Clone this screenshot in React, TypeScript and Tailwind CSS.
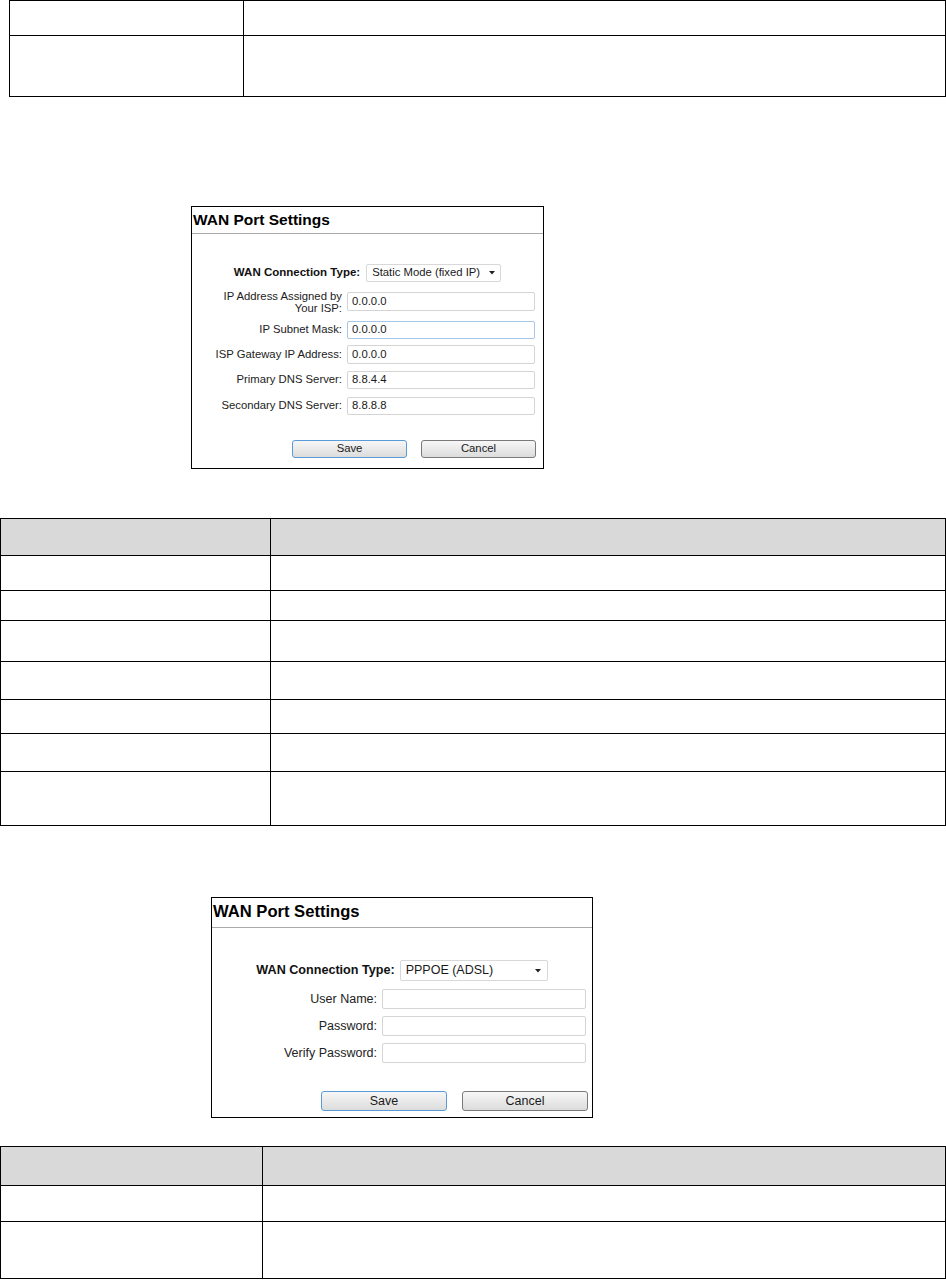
import React from "react";

const Caret = () => (
  <svg width="6" height="4" viewBox="0 0 6 4" className="block">
    <path d="M0 0 L6 0 L3 3.5 Z" fill="#222" />
  </svg>
);

export default function App() {
  return (
    <div className="w-[946px] min-h-[1280px] bg-white flex flex-col font-['Liberation_Sans',Arial,sans-serif] text-black">
      {/* Table 1 */}
      <div className="ml-[9px] w-[937px] border border-black flex flex-col">
        <div className="h-[35px] border-b border-black flex">
          <div className="w-[234px] border-r border-black" />
          <div className="flex-1" />
        </div>
        <div className="h-[60px] flex">
          <div className="w-[234px] border-r border-black" />
          <div className="flex-1" />
        </div>
      </div>

      {/* Dialog 1 */}
      <div className="ml-[191px] mt-[109px] w-[353px] h-[263px] border border-black bg-white flex flex-col">
        <div className="h-[25px] flex items-center pl-[1px] text-[15.5px] font-bold leading-none text-black">
          WAN Port Settings
        </div>
        <div className="mt-px h-px bg-[#a9a9a9]" />
        <div className="mt-[30px] h-[18px] flex justify-center items-center">
          <span className="text-[11.5px] font-bold leading-none text-[#111]">WAN Connection Type:</span>
          <div className="ml-[6px] w-[135px] h-[18px] border border-[#d8d8d8] rounded-[2px] bg-white flex items-center justify-between pl-[5px] pr-[5px]">
            <span className="text-[11.3px] leading-none text-[#1a1a1a]">Static Mode (fixed IP)</span>
            <Caret />
          </div>
        </div>
        <div className="mt-[10px] h-[19px] flex items-center">
          <div className="w-[150px] text-right text-[11.3px] leading-[12px] text-[#222]">
            IP Address Assigned by
            <br />
            Your ISP:
          </div>
          <div className="ml-[5px] w-[188px] h-[19px] border border-[#d4d4d4] rounded-[2px] flex items-center pl-[4px] text-[11.3px] leading-none text-[#1a1a1a]">
            0.0.0.0
          </div>
        </div>
        <div className="mt-[10px] h-[18px] flex items-center">
          <div className="w-[150px] text-right text-[11.3px] leading-none text-[#222]">IP Subnet Mask:</div>
          <div className="ml-[5px] w-[188px] h-[18px] border border-[#a6c8e6] rounded-[2px] flex items-center pl-[4px] text-[11.3px] leading-none text-[#1a1a1a]">
            0.0.0.0
          </div>
        </div>
        <div className="mt-[6px] h-[19px] flex items-center">
          <div className="w-[150px] text-right text-[11.3px] leading-none text-[#222]">ISP Gateway IP Address:</div>
          <div className="ml-[5px] w-[188px] h-[19px] border border-[#d4d4d4] rounded-[2px] flex items-center pl-[4px] text-[11.3px] leading-none text-[#1a1a1a]">
            0.0.0.0
          </div>
        </div>
        <div className="mt-[7px] h-[18px] flex items-center">
          <div className="w-[150px] text-right text-[11.3px] leading-none text-[#222]">Primary DNS Server:</div>
          <div className="ml-[5px] w-[188px] h-[18px] border border-[#d4d4d4] rounded-[2px] flex items-center pl-[4px] text-[11.3px] leading-none text-[#1a1a1a]">
            8.8.4.4
          </div>
        </div>
        <div className="mt-[8px] h-[18px] flex items-center">
          <div className="w-[150px] text-right text-[11.3px] leading-none text-[#222]">Secondary DNS Server:</div>
          <div className="ml-[5px] w-[188px] h-[18px] border border-[#d4d4d4] rounded-[2px] flex items-center pl-[4px] text-[11.3px] leading-none text-[#1a1a1a]">
            8.8.8.8
          </div>
        </div>
        <div className="mt-[25px] h-[18px] flex justify-end pr-[7px] gap-[14px]">
          <div className="w-[115px] h-[18px] border border-[#5a9ad6] rounded-[3px] bg-gradient-to-b from-[#f7f7f7] to-[#dcdcdc] flex items-center justify-center text-[11.3px] leading-none text-[#1a1a1a]">
            Save
          </div>
          <div className="w-[115px] h-[18px] border border-[#7a7a7a] rounded-[3px] bg-gradient-to-b from-[#f7f7f7] to-[#dcdcdc] flex items-center justify-center text-[11.3px] leading-none text-[#1a1a1a]">
            Cancel
          </div>
        </div>
      </div>

      {/* Table 2 */}
      <div className="mt-[49px] w-[946px] border border-black flex flex-col">
        <div className="h-[37px] border-b border-black flex bg-[#d9d9d9]">
          <div className="w-[270px] border-r border-black" />
          <div className="flex-1" />
        </div>
        <div className="h-[35px] border-b border-black flex">
          <div className="w-[270px] border-r border-black" />
          <div className="flex-1" />
        </div>
        <div className="h-[30px] border-b border-black flex">
          <div className="w-[270px] border-r border-black" />
          <div className="flex-1" />
        </div>
        <div className="h-[41px] border-b border-black flex">
          <div className="w-[270px] border-r border-black" />
          <div className="flex-1" />
        </div>
        <div className="h-[38px] border-b border-black flex">
          <div className="w-[270px] border-r border-black" />
          <div className="flex-1" />
        </div>
        <div className="h-[34px] border-b border-black flex">
          <div className="w-[270px] border-r border-black" />
          <div className="flex-1" />
        </div>
        <div className="h-[38px] border-b border-black flex">
          <div className="w-[270px] border-r border-black" />
          <div className="flex-1" />
        </div>
        <div className="h-[53px] flex">
          <div className="w-[270px] border-r border-black" />
          <div className="flex-1" />
        </div>
      </div>

      {/* Dialog 2 */}
      <div className="ml-[211px] mt-[71px] w-[382px] h-[221px] border border-black bg-white flex flex-col">
        <div className="h-[28px] flex items-center pl-[1px] text-[16.6px] font-bold leading-none text-black">
          WAN Port Settings
        </div>
        <div className="mt-px h-px bg-[#a9a9a9]" />
        <div className="mt-[32px] h-[21px] flex justify-center items-center">
          <span className="text-[12.6px] font-bold leading-none text-[#111]">WAN Connection Type:</span>
          <div className="ml-[5px] w-[148px] h-[21px] border border-[#d8d8d8] rounded-[2px] bg-white flex items-center justify-between pl-[5px] pr-[6px]">
            <span className="text-[12.5px] leading-none text-[#1a1a1a]">PPPOE (ADSL)</span>
            <Caret />
          </div>
        </div>
        <div className="mt-[8px] h-[20px] flex items-center">
          <div className="w-[165px] text-right text-[12.5px] leading-none text-[#222]">User Name:</div>
          <div className="ml-[5px] w-[204px] h-[20px] border border-[#d4d4d4] rounded-[2px]" />
        </div>
        <div className="mt-[7px] h-[20px] flex items-center">
          <div className="w-[165px] text-right text-[12.5px] leading-none text-[#222]">Password:</div>
          <div className="ml-[5px] w-[204px] h-[20px] border border-[#d4d4d4] rounded-[2px]" />
        </div>
        <div className="mt-[7px] h-[20px] flex items-center">
          <div className="w-[165px] text-right text-[12.5px] leading-none text-[#222]">Verify Password:</div>
          <div className="ml-[5px] w-[204px] h-[20px] border border-[#d4d4d4] rounded-[2px]" />
        </div>
        <div className="mt-[28px] h-[20px] flex justify-end pr-[4px] gap-[15px]">
          <div className="w-[126px] h-[20px] border border-[#5a9ad6] rounded-[3px] bg-gradient-to-b from-[#f7f7f7] to-[#dcdcdc] flex items-center justify-center text-[12.5px] leading-none text-[#1a1a1a]">
            Save
          </div>
          <div className="w-[126px] h-[20px] border border-[#7a7a7a] rounded-[3px] bg-gradient-to-b from-[#f7f7f7] to-[#dcdcdc] flex items-center justify-center text-[12.5px] leading-none text-[#1a1a1a]">
            Cancel
          </div>
        </div>
      </div>

      {/* Table 3 */}
      <div className="mt-[28px] w-[946px] border border-black flex flex-col">
        <div className="h-[39px] border-b border-black flex bg-[#d9d9d9]">
          <div className="w-[262px] border-r border-black" />
          <div className="flex-1" />
        </div>
        <div className="h-[36px] border-b border-black flex">
          <div className="w-[262px] border-r border-black" />
          <div className="flex-1" />
        </div>
        <div className="h-[56px] flex">
          <div className="w-[262px] border-r border-black" />
          <div className="flex-1" />
        </div>
      </div>
    </div>
  );
}
